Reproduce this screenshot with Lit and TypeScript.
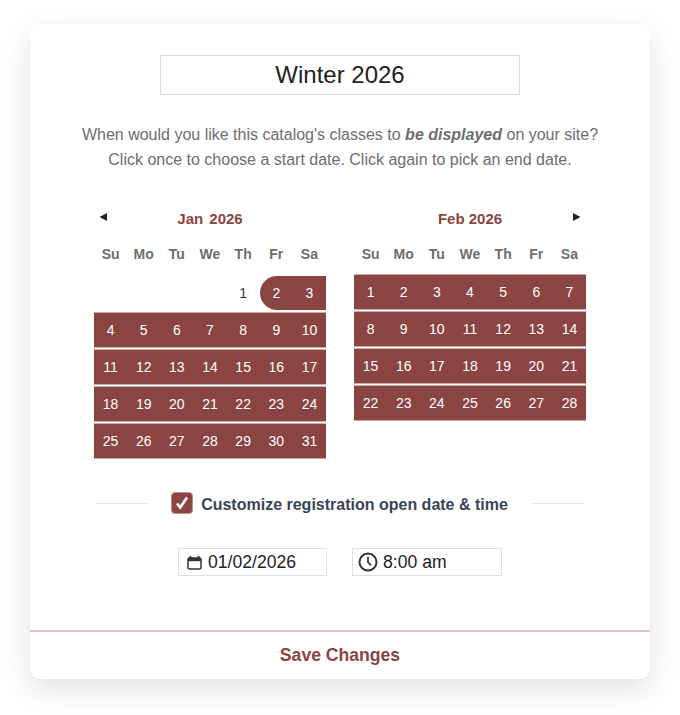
import { LitElement, html, css, svg } from "lit";
import { customElement } from "lit/decorators.js";

const DOW = ["Su", "Mo", "Tu", "We", "Th", "Fr", "Sa"];

function weeks(lead: number, days: number) {
  const cells: (number | null)[] = [...Array(lead).fill(null)];
  for (let d = 1; d <= days; d++) cells.push(d);
  const out: (number | null)[][] = [];
  for (let i = 0; i < cells.length; i += 7) out.push(cells.slice(i, i + 7));
  return out;
}

@customElement("app-root")
export class AppRoot extends LitElement {
  static styles = css`
    :host {
      display: block;
      width: 680px;
      height: 715px;
      padding: 24px 30px 36px;
      box-sizing: border-box;
      font-family: "Liberation Sans", Arial, sans-serif;
      background: #fff;
    }
    .card {
      height: 655px;
      background: #fff;
      border-radius: 10px;
      box-shadow: 0 10px 30px rgba(0, 0, 0, 0.12);
      display: flex;
      flex-direction: column;
    }
    .body { flex: 1; display: flex; flex-direction: column; align-items: center; padding-top: 31px; }
    .title {
      width: 360px; height: 40px; box-sizing: border-box;
      border: 1px solid #d9d9d9;
      display: flex; align-items: center; justify-content: center;
      font-size: 24px; color: #222;
    }
    .intro {
      margin: 27px 0 0; text-align: center;
      font-size: 16px; line-height: 25px; color: #6e6e6e;
    }
    .intro b { font-style: italic; }
    .cals { display: flex; gap: 28px; margin-top: 35px; width: 492px; }
    .cal { width: 232px; }
    .head {
      height: 22px; display: flex; align-items: center; justify-content: center;
      position: relative; font-size: 15px; font-weight: 700; color: #8a4543;
    }
    .jan .head span { word-spacing: 2px; }
    .arrow { position: absolute; top: 5px; }
    .prev { left: 5px; }
    .next { right: 5px; }
    .dow {
      display: grid; grid-template-columns: repeat(7, 1fr);
      margin-top: 15px; height: 20px; align-items: center;
      font-size: 14px; font-weight: 700; color: #6e6e6e; text-align: center;
    }
    .grid { display: flex; flex-direction: column; gap: 3px; margin-top: 12px; }
    .feb .grid { margin-top: 11px; }
    .wk {
      display: grid; grid-template-columns: repeat(7, 1fr);
      height: 34px; align-items: center;
      font-size: 14px; text-align: center;
    }
    .d { height: 34px; line-height: 34px; color: #333; }
    .on { background: #8a4543; color: #fff; box-shadow: 0 1px 0 #c9a9a8, 0 -1px 0 #c9a9a8; }
    .on.start { border-radius: 17px 0 0 17px; box-shadow: none; }
    .on.after { box-shadow: none; }
    .opt {
      display: flex; align-items: center; width: 488px; margin-top: 37px;
      font-size: 16px; font-weight: 700; color: #3a4558;
    }
    .opt i { flex: 1; height: 1px; background: #e3e3e3; margin-bottom: 3px; }
    .opt .lbl { display: flex; align-items: center; gap: 8px; margin: 0 25px 0 24px; }
    .cb {
      width: 22px; height: 22px; box-sizing: border-box; border-radius: 4px;
      background: #8a4543; border: 1px solid #b98f8e;
      display: flex; align-items: center; justify-content: center;
      margin-top: -3px;
    }
    .fields { display: flex; gap: 25px; margin-top: 34px; }
    .f {
      width: 150px; height: 28px; box-sizing: border-box;
      border: 1px solid #e0e0e0;
      display: flex; align-items: center;
      font-size: 17.6px; color: #222;
    }
    .f.date { padding-left: 8px; gap: 6px; width: 149px; }
    .f.time { padding-left: 5px; gap: 5px; }
    .foot {
      height: 47px; border-top: 2px solid #dcc6c5;
      display: flex; align-items: center; justify-content: center;
      font-size: 17.6px; font-weight: 700; color: #8a4543;
    }
  `;

  private cal(name: string, cls: string, lead: number, days: number, from: number) {
    return html`<div class="cal ${cls}">
      <div class="head">
        ${cls === "jan"
          ? html`<svg class="arrow prev" width="9" height="10" viewBox="0 0 9 10"><path d="M8 1v8L0.5 5z" fill="#222"/></svg>`
          : html`<svg class="arrow next" width="9" height="10" viewBox="0 0 9 10"><path d="M1 1v8l7.5-4z" fill="#222"/></svg>`}
        <span>${name}</span>
      </div>
      <div class="dow">${DOW.map((d) => html`<div>${d}</div>`)}</div>
      <div class="grid">
        ${weeks(lead, days).map(
          (w) => html`<div class="wk">
            ${w.map((d) =>
              d === null
                ? html`<div class="d"></div>`
                : html`<div class="d ${d >= from ? "on" : ""} ${d === from && lead > 0 ? "start" : ""} ${lead > 0 && d > from && d < 4 ? "after" : ""}">${d}</div>`
            )}
          </div>`
        )}
      </div>
    </div>`;
  }

  render() {
    const calIcon = svg`<path d="M3.5 1v2.5M11.5 1v2.5" stroke="#333" stroke-width="1.7"/><rect x="1" y="3" width="13" height="11" rx="1.4" fill="none" stroke="#333" stroke-width="1.5"/><rect x="1" y="3" width="13" height="3.2" fill="#333"/>`;
    const clock = svg`<circle cx="10" cy="10" r="8.5" fill="none" stroke="#333" stroke-width="1.9"/><path d="M10 4.8V10.4l3.2 3" fill="none" stroke="#333" stroke-width="1.7"/>`;
    return html`<div class="card">
      <div class="body">
        <div class="title">Winter 2026</div>
        <p class="intro">
          When would you like this catalog's classes to <b>be displayed</b> on your site?<br />
          Click once to choose a start date. Click again to pick an end date.
        </p>
        <div class="cals">
          ${this.cal("Jan 2026", "jan", 4, 31, 2)}
          ${this.cal("Feb 2026", "feb", 0, 28, 1)}
        </div>
        <div class="opt">
          <i></i>
          <div class="lbl">
            <div class="cb">
              <svg width="14" height="14" viewBox="0 0 14 14"><path d="M2 7.5l3.2 4L12 1.5" fill="none" stroke="#fff" stroke-width="2.6"/></svg>
            </div>
            Customize registration open date &amp; time
          </div>
          <i></i>
        </div>
        <div class="fields">
          <div class="f date"><svg width="15" height="15" viewBox="0 0 15 15">${calIcon}</svg>01/02/2026</div>
          <div class="f time"><svg width="20" height="20" viewBox="0 0 20 20">${clock}</svg>8:00 am</div>
        </div>
      </div>
      <div class="foot">Save Changes</div>
    </div>`;
  }
}
